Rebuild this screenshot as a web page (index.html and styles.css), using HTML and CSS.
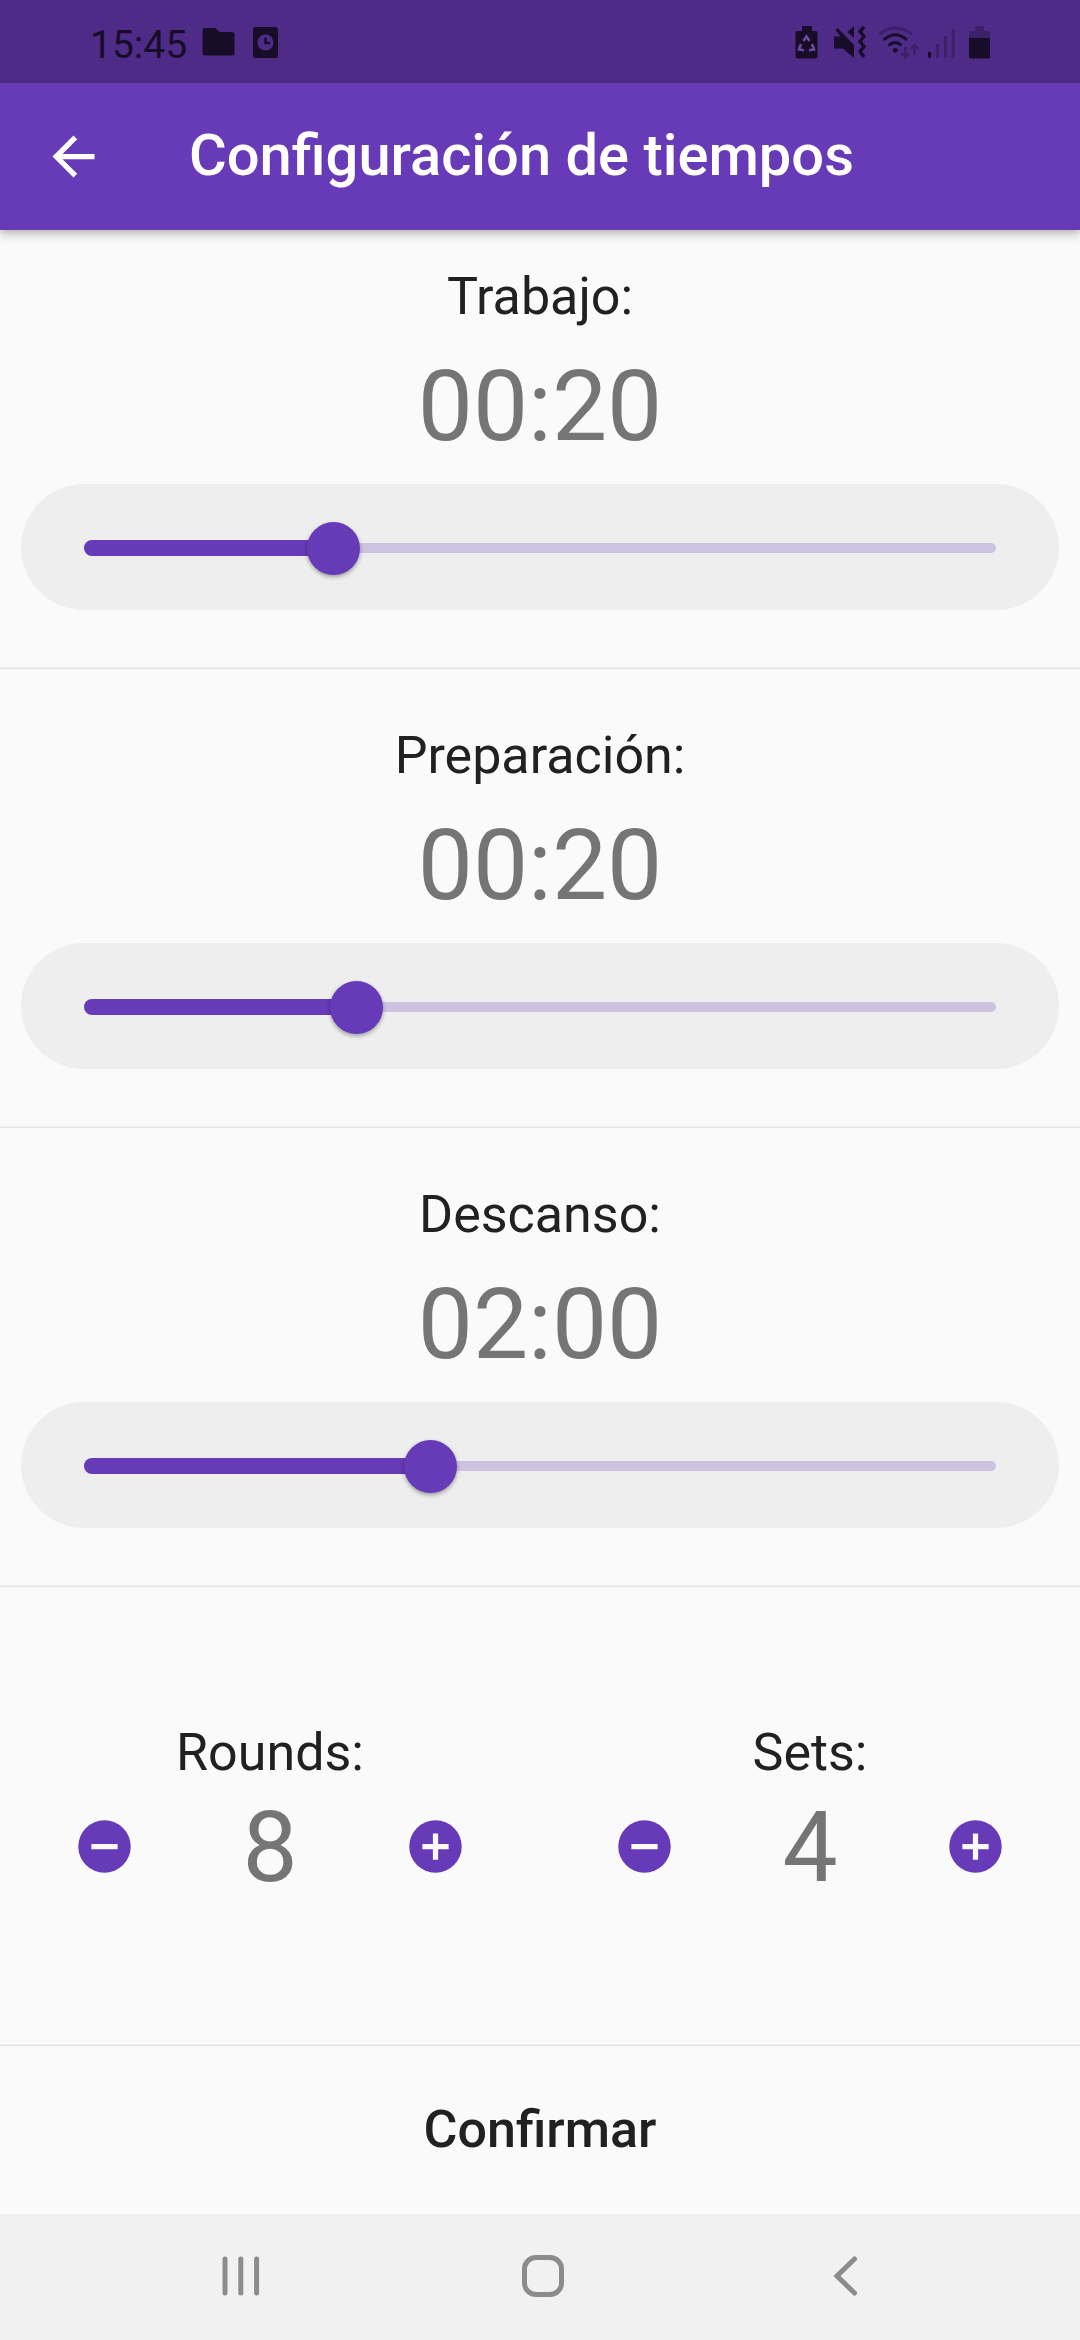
FILE: index.html
```
<!DOCTYPE html>
<html lang="es">
<head>
<meta charset="utf-8">
<title>Configuración de tiempos</title>
<link rel="stylesheet" href="styles.css">
</head>
<body>
<div class="screen">
  <div class="status-bar">
    <div class="status-left">
      <span class="clock">15:45</span>
      <svg class="icon-folder" width="33" height="28" viewBox="0 0 33 28"><path d="M3 0h10.500l4 4H30a2.500 2.500 0 0 1 2.500 2.500V25a2.500 2.500 0 0 1-2.500 2.500H3A2.500 2.500 0 0 1 .5 25V2.500A2.500 2.500 0 0 1 3 0z"/></svg>
      <svg class="icon-alarm" width="25" height="31" viewBox="0 0 25 31"><path fill-rule="evenodd" d="M2.500 0h20A2.500 2.500 0 0 1 25 2.500v26a2.500 2.500 0 0 1-2.500 2.500h-20A2.500 2.500 0 0 1 0 28.500v-26A2.500 2.500 0 0 1 2.500 0zM12.500 7.500a8 8 0 1 0 0 16 8 8 0 0 0 0-16z"/><path class="hand" d="M12.500 10.500v5.500H17"/></svg>
    </div>
    <svg class="status-right" width="200" height="36" viewBox="794 24 200 36">
      <path d="M802 26h10v5h3.500a2 2 0 0 1 2 2v23.500a2 2 0 0 1-2 2h-18a2 2 0 0 1-2-2V33a2 2 0 0 1 2-2h4.500z"/>
      <g class="recycle"><path d="M803.500 41l3-4.500 3 4.500M812 44l2 5.500-5 .8M801 44l-2 5.500 5 .8"/></g>
      <path d="M806.500 40l3.500 4.500h-2V50h-3v-5.500h-2zM834 36.500h6.500l-5-6.500 2-2 16.500 17v13l-11-9.500h-9v-12zM847.500 32l6.500-6v12z"/>
      <path class="wave" d="M864 27l-4 4.500 4 5-4 5 4 5-4 5 4 5.500"/>
      <g class="faint"><path class="arc" d="M879 34.500q16.500-13 33 0"/><path class="mini" d="M905.300 47v9M901.500 53l3.800 3.800 3.800-3.800M914.700 55v-9M910.900 49l3.800-3.800 3.800 3.800"/><path class="bar" d="M937.500 45v11.500M945.500 37v19.500M953.300 30v26.500"/></g>
      <path class="arc" d="M883.500 40q12-10.500 23.500 0M888.500 45.500q7-6 13 0"/><circle cx="895.300" cy="50.300" r="2.400"/>
      <path class="bar" d="M929.500 53v3.500"/>
      <path class="battery-top" d="M975 26h9v5h4a2 2 0 0 1 2 2v5.500h-21V33a2 2 0 0 1 2-2h4z"/>
      <path d="M969 38h21v18.500a2 2 0 0 1-2 2h-17a2 2 0 0 1-2-2z"/>
    </svg>
  </div>

  <header class="app-bar">
    <svg class="back" width="63" height="63" viewBox="0 0 24 24"><path d="M20 11H7.830l5.590-5.590L12 4l-8 8 8 8 1.410-1.410L7.830 13H20v-2z"/></svg>
    <h1>Configuración de tiempos</h1>
  </header>

  <main>
    <section class="setting">
      <h2>Trabajo:</h2>
      <div class="value">00:20</div>
      <div class="slider"><div class="track"><div class="active" style="width:27.27%"></div><div class="thumb"></div></div></div>
    </section>
    <section class="setting">
      <h2>Preparación:</h2>
      <div class="value">00:20</div>
      <div class="slider"><div class="track"><div class="active" style="width:29.82%"></div><div class="thumb"></div></div></div>
    </section>
    <section class="setting">
      <h2>Descanso:</h2>
      <div class="value">02:00</div>
      <div class="slider"><div class="track"><div class="active" style="width:37.93%"></div><div class="thumb"></div></div></div>
    </section>
    <section class="counters">
      <div class="counter">
        <h2>Rounds:</h2>
        <div class="stepper">
          <svg class="step" width="63" height="63" viewBox="0 0 24 24"><path d="M12 2a10 10 0 1 0 0 20 10 10 0 0 0 0-20zm5 11H7v-2h10v2z"/></svg>
          <span class="value">8</span>
          <svg class="step" width="63" height="63" viewBox="0 0 24 24"><path d="M12 2a10 10 0 1 0 0 20 10 10 0 0 0 0-20zm5 11h-4v4h-2v-4H7v-2h4V7h2v4h4v2z"/></svg>
        </div>
      </div>
      <div class="counter">
        <h2>Sets:</h2>
        <div class="stepper">
          <svg class="step" width="63" height="63" viewBox="0 0 24 24"><path d="M12 2a10 10 0 1 0 0 20 10 10 0 0 0 0-20zm5 11H7v-2h10v2z"/></svg>
          <span class="value">4</span>
          <svg class="step" width="63" height="63" viewBox="0 0 24 24"><path d="M12 2a10 10 0 1 0 0 20 10 10 0 0 0 0-20zm5 11h-4v4h-2v-4H7v-2h4V7h2v4h4v2z"/></svg>
        </div>
      </div>
    </section>
    <button class="confirm">Confirmar</button>
  </main>

  <nav class="nav-bar">
    <svg width="40" height="44" viewBox="0 0 40 44"><path d="M4 5v34M19.800 5v34M35.600 5v34"/></svg>
    <svg class="nav-home" width="44" height="44" viewBox="0 0 44 44"><rect x="3.500" y="3.500" width="37" height="37" rx="11.500"/></svg>
    <svg width="28" height="44" viewBox="0 0 28 44"><path d="M23.500 5L6 22l17.500 17"/></svg>
  </nav>
</div>
</body>
</html>
```
FILE: styles.css
```
* { box-sizing: border-box; }

body {
  margin: 0;
  background: #fafafa;
  color: #212121;
  font-family: Roboto, sans-serif;
}

svg { display: block; flex: none; }
h1, h2 { margin: 0; font-weight: 400; white-space: nowrap; }

.screen {
  width: 1080px;
  height: 2340px;
  display: flex;
  flex-direction: column;
  overflow: hidden;
}

/* Status bar */
.status-bar {
  height: 83px;
  flex: none;
  display: flex;
  justify-content: space-between;
  align-items: flex-start;
  padding: 24px 86px 0 90px;
  background: #4e2b87;
  color: #180d29;
  fill: #180d29;
}
.status-left { display: flex; align-items: flex-start; }
.clock { width: 112px; font-size: 39px; line-height: 42px; }
.icon-folder { margin-top: 4px; }
.icon-alarm { margin: 3px 0 0 18px; }
.hand { fill: none; stroke: #180d29; stroke-width: 2.500; }
.recycle { fill: none; stroke: #6b4ba0; stroke-width: 2.600; }
.wave { fill: none; stroke: #180d29; stroke-width: 3.400; }
.arc { fill: none; stroke: #180d29; stroke-width: 2.800; }
.bar { stroke: #180d29; stroke-width: 3.200; stroke-linecap: round; }
.faint path { stroke: #3c2168; }
.mini { fill: none; stroke-width: 2.600; }
.battery-top { fill: #3c2168; }

/* App bar */
.app-bar {
  position: relative;
  height: 147px;
  flex: none;
  display: flex;
  align-items: center;
  gap: 84px;
  padding: 0 42px;
  background: #673ab7;
  color: #fff;
  fill: #fff;
  box-shadow: 0 5px 10px rgba(0, 0, 0, .2), 0 2px 6px rgba(0, 0, 0, .1);
}
.app-bar h1 { padding-bottom: 3px; font-size: 57.850px; font-weight: 500; }

/* Settings */
main { flex: 1; display: flex; flex-direction: column; }
.setting, .counters {
  height: 459px;
  flex: none;
  background: linear-gradient(#f0f0f0 50%, #e2e2e2 50%) 0 100% / 100% 2px no-repeat;
}
.setting {
  display: flex;
  flex-direction: column;
  align-items: center;
  gap: 21px;
  padding: 56px 21px 0;
}
.setting:first-child { height: 439px; padding-top: 36px; }
h2 { font-size: 52px; line-height: 61px; }
.value {
  height: 115px;
  padding-top: 1px;
  font-size: 98.200px;
  line-height: 115px;
  color: #757575;
}
.slider {
  width: 100%;
  height: 126px;
  padding: 59px 63px 57px;
  border-radius: 63px;
  background: #eee;
}
.track {
  height: 10px;
  display: flex;
  align-items: center;
  border-radius: 5px;
  background: #cdc2e0;
}
.active {
  height: 16px;
  border-radius: 8px 0 0 8px;
  background: #673ab7;
}
.thumb {
  width: 53px;
  height: 53px;
  margin-left: -26px;
  border-radius: 50%;
  background: #673ab7;
  box-shadow: 0 2px 4px rgba(0, 0, 0, .35);
}

/* Counters */
.counters { display: grid; grid-template-columns: 1fr 1fr; }
.counter {
  display: flex;
  flex-direction: column;
  align-items: center;
  gap: 6px;
  padding: 135px 73px 0;
}
.stepper {
  width: 100%;
  display: flex;
  align-items: center;
  justify-content: space-between;
}
.step { fill: #673ab7; }

.confirm {
  flex: 1;
  border: 0;
  padding: 0 0 2px;
  background: none;
  color: #212121;
  font: 500 52px Roboto, sans-serif;
}

/* System navigation */
.nav-bar {
  height: 126px;
  flex: none;
  display: flex;
  align-items: center;
  justify-content: space-between;
  padding: 0 221px 2px;
  background: #f1f1f1;
  fill: none;
  stroke: #8c8c8c;
  stroke-width: 5;
  stroke-linecap: round;
}
.nav-home { margin-right: 7px; }
```
